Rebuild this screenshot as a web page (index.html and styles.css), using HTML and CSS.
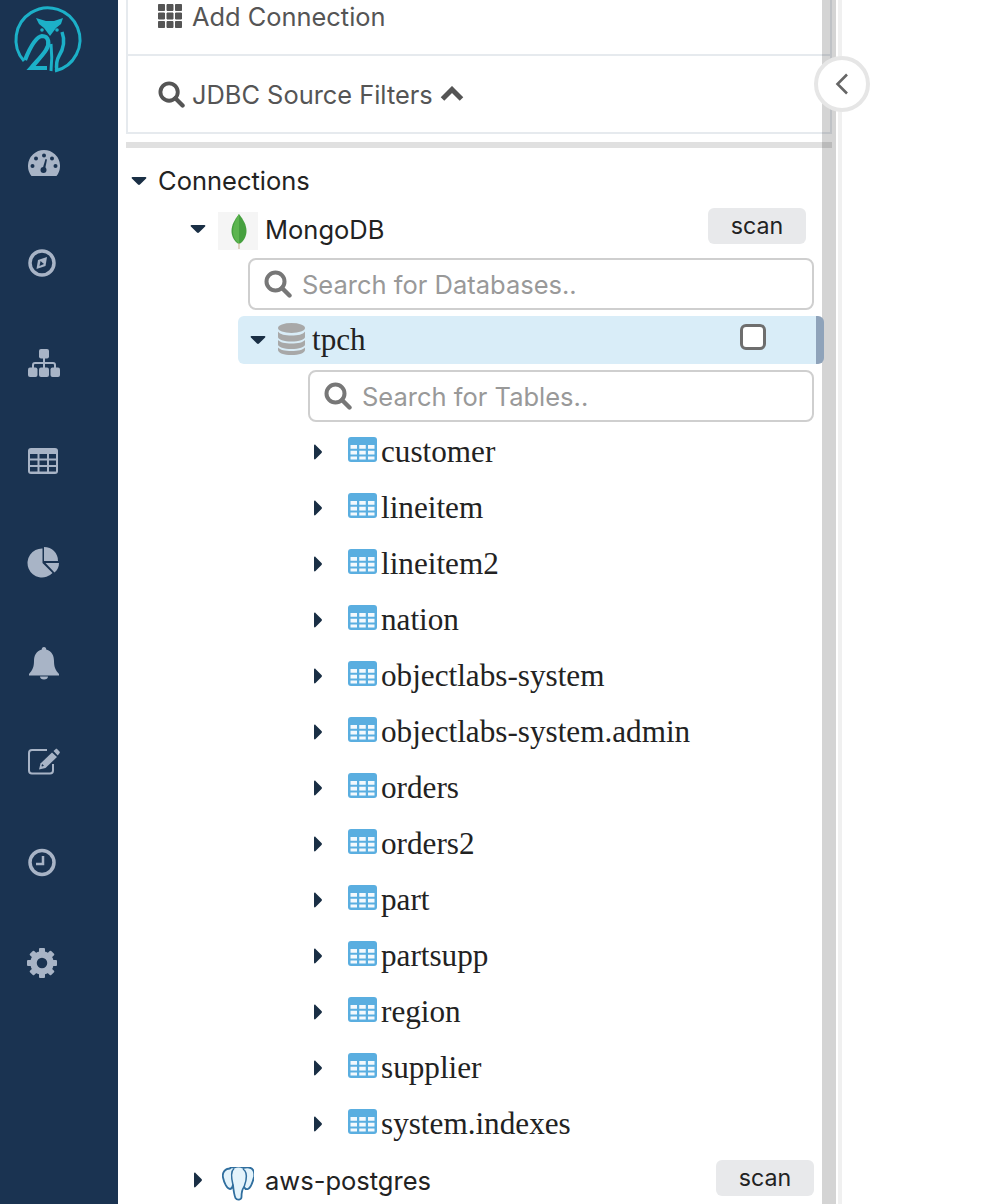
FILE: index.html
```html
<!DOCTYPE html>
<html lang="en">
    <head>
        <meta charset="utf-8">
        <meta name="viewport" content="width=device-width, initial-scale=1.0">
        <title>Connections</title>
        <link rel="stylesheet" href="styles.css">
    </head>
    <body>
        <svg class="sprite" xmlns="http://www.w3.org/2000/svg"> <!-- icons used more than once. -->
            <symbol id="caret-down" viewBox="0 0 16 16"><path d="M1.500 4h13c.8 0 1.200.9.6 1.500L9 11.500c-.6.6-1.400.6-2 0L.9 5.500C.3 4.900.7 4 1.500 4z"/></symbol>
            <symbol id="caret-right" viewBox="0 0 16 16"><path d="M4 1.500v13c0 .8.9 1.200 1.500.6l6-6.100c.6-.6.6-1.400 0-2l-6-6.100C4.900.3 4 .7 4 1.500z"/></symbol>
            <symbol id="search" viewBox="0 0 28 28"><circle cx="11.500" cy="11.500" r="9" fill="none" stroke="currentColor" stroke-width="4"/><path d="M18 18l7.500 7.500" fill="none" stroke="currentColor" stroke-width="4.400" stroke-linecap="round"/></symbol>
            <symbol id="table" viewBox="0 0 29 25"><rect width="29" height="25" rx="3" fill="#5aaee0"/><path fill="#f4f9fd" d="M2.500 8H9v3.800H2.500zM11.250 8h6.500v3.800h-6.500zM20 8h6.500v3.800H20zM2.500 13.800H9v3.800H2.500zM11.250 13.800h6.500v3.800h-6.500zM20 13.800h6.500v3.800H20zM2.500 19.600H9v3H2.500zM11.250 19.600h6.500v3h-6.500zM20 19.600h6.500v3H20z"/></symbol>
        </svg>
        <div id="wrapper">
            <nav class="sidenav"> <!-- dark bar on the left. -->
                <div class="logo-slot">
                    <svg class="logo" viewBox="10 2 76 76" fill="none" stroke="#1cb0c8">
                        <path stroke-width="3" d="M24 61A32 32 0 1 1 55 71"/>
                        <path fill="#1cb0c8" stroke="none" d="M36 18l10 3h8l9-3-2 6-5 4-6 8-6-8-5-4z"/>
                        <circle cx="42" cy="30" r="1.800" fill="#1cb0c8" stroke="none"/>
                        <circle cx="57" cy="30" r="1.800" fill="#1cb0c8" stroke="none"/>
                        <path stroke-width="4.200" d="M25 60c4-10 10-23 17-24 7 0 8 8 4 14-3 5-9 11-15 18h16"/>
                        <path stroke-width="3.500" d="M62 32c3 8 2 16-3 24-3 5-3 9-2 15"/>
                        <path stroke-width="3" d="M51 44c1 9 1 18 0 27"/>
                    </svg>
                </div>
                <div class="nav-item"><svg viewBox="0 0 40 40"><path d="M7.500 33A16 16 0 1 1 32.500 33z"/><g class="cut"><circle cx="20" cy="12.500" r="2"/><circle cx="12" cy="15.500" r="2"/><circle cx="28" cy="15.500" r="2"/><circle cx="8.500" cy="23" r="2"/><circle cx="31.500" cy="23" r="2"/><circle cx="19.500" cy="27" r="3"/><path d="M18.500 26l3-10 1.500.5-2 10z"/></g></svg></div>
                <div class="nav-item"><svg viewBox="0 0 40 40"><circle cx="18" cy="20" r="12" class="line" stroke-width="3.500"/><path d="M12.500 26l1.500-9 9-3-1.500 9z"/><path class="cut" d="M15.500 23l1-5 3.500 3z"/></svg></div>
                <div class="nav-item"><svg viewBox="0 0 40 40"><rect x="15" y="6" width="10" height="9.500" rx="2"/><rect x="4" y="24.500" width="9.500" height="9.500" rx="2"/><rect x="15" y="24.500" width="10" height="9.500" rx="2"/><rect x="26.500" y="24.500" width="9.500" height="9.500" rx="2"/><path class="line" stroke-width="2" d="M20 15v10M9 25v-3a2 2 0 0 1 2-2h18a2 2 0 0 1 2 2v3"/></svg></div>
                <div class="nav-item"><svg viewBox="0 0 40 40"><rect x="4" y="5" width="30" height="26" rx="3"/><path class="cut" d="M6 11h7.500v4.500H6zM15.500 11h7.500v4.500h-7.500zM25 11h7v4.500h-7zM6 17.500h7.500V22H6zM15.500 17.500h7.500V22h-7.500zM25 17.500h7V22h-7zM6 24h7.500v4.500H6zM15.500 24h7.500v4.500h-7.500zM25 24h7v4.500h-7z"/></svg></div>
                <div class="nav-item"><svg viewBox="0 0 40 40"><path d="M18.500 5.500V20l10 10A14.500 14.500 0 1 1 18.500 5.500z"/><path d="M20 4c8 0 14 6 14 14H20z"/><path d="M21.500 20H35c0 4-1.500 7-4.500 9.500z"/></svg></div>
                <div class="nav-item"><svg viewBox="0 0 40 40"><path d="M20 4c1.500 0 2.300 1 2.200 2.500C28 8 30 13 30 18c0 6 1.500 9 5 13v1.500H5V31c3.500-4 5-7 5-13 0-5 2-10 7.800-11.500C17.700 5 18.500 4 20 4z"/><path d="M16 33.500h8c0 2-1.700 3-4 3s-4-1-4-3z"/></svg></div>
                <div class="nav-item"><svg viewBox="0 0 40 40"><path class="line" stroke-width="2" d="M23 7H8a3 3 0 0 0-3 3v17.500a3 3 0 0 0 3 3h18a3 3 0 0 0 3-3V21"/><path d="M15 26.500l1.500-6L28 9.500l5 4.500-11.500 11z"/><path d="M29.500 8l2-1.800c.6-.5 1.300-.5 1.800 0l2.200 2.300c.5.500.5 1.200 0 1.700l-1.800 2.200z"/><path class="cut" d="M17.500 23l.6-2 1.900 1.800-2 .6z"/></svg></div>
                <div class="nav-item"><svg viewBox="0 0 40 40"><circle cx="18" cy="19.500" r="12" class="line" stroke-width="3.500"/><path class="line" stroke-width="2.500" d="M19 13v8h-7"/></svg></div>
                <div class="nav-item"><svg viewBox="0 0 40 40"><circle cx="18" cy="20" r="8.500" class="line" stroke-width="6.500"/><rect x="15" y="5" width="6" height="5" rx="1"/><rect x="15" y="30" width="6" height="5" rx="1"/><rect x="3" y="17" width="5" height="6" rx="1"/><rect x="28" y="17" width="5" height="6" rx="1"/><rect x="15" y="5" width="6" height="5" rx="1" transform="rotate(45 18 20)"/><rect x="15" y="5" width="6" height="5" rx="1" transform="rotate(135 18 20)"/><rect x="15" y="5" width="6" height="5" rx="1" transform="rotate(225 18 20)"/><rect x="15" y="5" width="6" height="5" rx="1" transform="rotate(315 18 20)"/></svg></div>
            </nav>
            <div class="panel">
                <div class="source-box"> <!-- top part is scrolled away. -->
                    <div class="source-row">
                        <svg class="grid-icon" viewBox="0 0 24 24"><path d="M.5.5h6v6h-6zM9 .5h6v6H9zM17.500.5h6v6h-6zM.5 9h6v6h-6zM9 9h6v6H9zM17.500 9h6v6h-6zM.5 17.500h6v6h-6zM9 17.500h6v6H9zM17.500 17.500h6v6h-6z"/></svg>
                        <span>Add Connection</span>
                    </div>
                    <div class="source-row">
                        <svg class="source-icon"><use href="#search"/></svg>
                        <span>JDBC Source Filters</span>
                        <svg class="chevron" viewBox="0 0 24 16"><path d="M2.500 13L12 3.500l9.500 9.500" fill="none" stroke="currentColor" stroke-width="5"/></svg>
                    </div>
                </div>
                <div class="divider"></div>
                <div class="tree">
                    <div class="row row-root">
                        <svg class="caret"><use href="#caret-down"/></svg>
                        <span class="label">Connections</span>
                    </div>
                    <div class="row row-conn">
                        <svg class="caret"><use href="#caret-down"/></svg>
                        <span class="conn-icon mongo">
                            <svg viewBox="0 0 20 38" width="20" height="38"><path d="M10 2c4.500 6 7.500 11 7.500 17 0 6-3.500 11-7 13h-1c-3.500-2-7-7-7-13C2.500 13 5.500 8 10 2z" fill="#46a03f"/><path d="M10 2c-3.500 6-6 11-6 17 0 6 3 10 6 13z" fill="#5cb54f"/><path d="M10 31v6" stroke="#c9b99a" stroke-width="1.200"/></svg>
                        </span>
                        <span class="label">MongoDB</span>
                        <span class="scan">scan</span>
                    </div>
                    <div class="search search-db">
                        <svg><use href="#search"/></svg>
                        <input type="text" placeholder="Search for Databases..">
                    </div>
                    <div class="row row-db">
                        <svg class="caret"><use href="#caret-down"/></svg>
                        <svg class="db-icon" viewBox="0 0 27 32" fill="#a8a8a8"><ellipse cx="13.500" cy="5" rx="13.500" ry="5"/><path d="M0 8.500c2 3 7 4 13.500 4S25 11.500 27 8.500V14c0 2.500-6 4.500-13.500 4.500S0 16.500 0 14z"/><path d="M0 17c2 2.500 7 3.500 13.500 3.500S25 19.500 27 17v4.500c0 2.500-6 4.500-13.500 4.500S0 24 0 21.500z"/><path d="M0 24.500c2 2.500 7 3.500 13.500 3.500S25 27 27 24.500V27c0 3-6 5-13.500 5S0 30 0 27z"/></svg>
                        <span class="label serif">tpch</span>
                        <span class="check"></span>
                    </div>
                    <div class="search search-table">
                        <svg><use href="#search"/></svg>
                        <input type="text" placeholder="Search for Tables..">
                    </div>
                    <div class="table-list">
                        <div class="row row-table"><svg class="caret"><use href="#caret-right"/></svg><svg class="table-icon"><use href="#table"/></svg><span class="label serif">customer</span></div>
                        <div class="row row-table"><svg class="caret"><use href="#caret-right"/></svg><svg class="table-icon"><use href="#table"/></svg><span class="label serif">lineitem</span></div>
                        <div class="row row-table"><svg class="caret"><use href="#caret-right"/></svg><svg class="table-icon"><use href="#table"/></svg><span class="label serif">lineitem2</span></div>
                        <div class="row row-table"><svg class="caret"><use href="#caret-right"/></svg><svg class="table-icon"><use href="#table"/></svg><span class="label serif">nation</span></div>
                        <div class="row row-table"><svg class="caret"><use href="#caret-right"/></svg><svg class="table-icon"><use href="#table"/></svg><span class="label serif">objectlabs-system</span></div>
                        <div class="row row-table"><svg class="caret"><use href="#caret-right"/></svg><svg class="table-icon"><use href="#table"/></svg><span class="label serif">objectlabs-system.admin</span></div>
                        <div class="row row-table"><svg class="caret"><use href="#caret-right"/></svg><svg class="table-icon"><use href="#table"/></svg><span class="label serif">orders</span></div>
                        <div class="row row-table"><svg class="caret"><use href="#caret-right"/></svg><svg class="table-icon"><use href="#table"/></svg><span class="label serif">orders2</span></div>
                        <div class="row row-table"><svg class="caret"><use href="#caret-right"/></svg><svg class="table-icon"><use href="#table"/></svg><span class="label serif">part</span></div>
                        <div class="row row-table"><svg class="caret"><use href="#caret-right"/></svg><svg class="table-icon"><use href="#table"/></svg><span class="label serif">partsupp</span></div>
                        <div class="row row-table"><svg class="caret"><use href="#caret-right"/></svg><svg class="table-icon"><use href="#table"/></svg><span class="label serif">region</span></div>
                        <div class="row row-table"><svg class="caret"><use href="#caret-right"/></svg><svg class="table-icon"><use href="#table"/></svg><span class="label serif">supplier</span></div>
                        <div class="row row-table"><svg class="caret"><use href="#caret-right"/></svg><svg class="table-icon"><use href="#table"/></svg><span class="label serif">system.indexes</span></div>
                    </div>
                    <div class="row row-conn row-last">
                        <svg class="caret"><use href="#caret-right"/></svg>
                        <span class="conn-icon elephant">
                            <svg viewBox="0 0 32 34" width="32" height="34" fill="#e3f3fb" stroke="#2f6e9e" stroke-width="1.800" stroke-linejoin="round"><path d="M8 1.500C3 1.500 0 5.500 1 10.500 2 15.500 5 22 8 22c1.500 0 2.500-2 3-4 .5 5 1 10 2.500 13 1.500 2.500 6 2 6-1 0-4 0-7 2.500-10 1 2 2.500 2.500 4 2 3-1.500 5-8 6-12 1-5-1-9-5-9.500-2-.3-4 0-5.500.5-3-1.500-7-1.500-9-.5-1.500-.3-3-.2-4 0z"/><path fill="none" stroke-width="1.500" d="M12 1.500C9 4 9 10 11 18M21 2c3 2 4 6 3 11-.5 3-2 6-2 8"/></svg>
                        </span>
                        <span class="label">aws-postgres</span>
                        <span class="scan">scan</span>
                    </div>
                </div>
                <div class="scroll-strip"></div>
            </div>
            <div class="rail"></div>
            <button type="button" class="collapse">
                <svg viewBox="0 0 16 24" width="16" height="24"><path d="M13 2.500L3.500 12l9.500 9.500" fill="none" stroke="#666" stroke-width="2.600"/></svg>
            </button>
        </div>
    </body>
</html>
```

FILE: styles.css
```css
*{
    margin: 0;
    padding: 0;
    box-sizing: border-box;
}
html, body{
    height: 100%;
    overflow: hidden;
    background: #fff;
}
body{
    font-family: Inter, "Liberation Sans", sans-serif;
    color: #222;
}
.sprite{
    display: none;
}
#wrapper{
    height: 1204px;
    display: flex;
    position: relative;
    overflow: hidden;
}
/* left bar */
.sidenav{
    width: 118px;
    flex: none;
    background-color: #1a3351;
}
.logo-slot{
    height: 113px;
    padding: 2px 0 0 10px;
}
.logo{
    display: block;
    width: 76px;
    height: 76px;
}
.nav-item{
    height: 100px;
    padding-left: 24px;
    display: flex;
    align-items: center;
}
.nav-item svg{
    width: 40px;
    height: 40px;
    fill: #a8b4c6;
}
.nav-item .cut{
    fill: #1a3351;
}
.nav-item .line{
    fill: none;
    stroke: #a8b4c6;
}
/* middle panel */
.panel{
    width: 718px;
    flex: none;
    padding-left: 8px;
    position: relative;
}
.source-box{
    width: 706px;
    margin-top: -23px;
    border: 2px solid #e6eaee;
}
.source-row{
    height: 76px;
    padding-left: 30px;
    display: flex;
    align-items: center;
    font-size: 25.4px;
    color: #555;
}
.source-row:first-child{
    height: 77px;
    border-bottom: 2px solid #e6eaee;
}
.grid-icon{
    width: 24px;
    height: 24px;
    margin-right: 10px;
    margin-bottom: 2px;
    fill: #555;
    stroke: #555;
    stroke-linejoin: round;
}
.source-icon{
    width: 27px;
    height: 27px;
    margin-right: 7px;
    color: #555;
}
.chevron{
    width: 24px;
    height: 16px;
    margin-left: 7px;
    color: #555;
}
.divider{
    width: 706px;
    height: 6px;
    margin-top: 8px;
    background-color: #e0e0e0;
}
.tree{
    width: 706px;
    padding-top: 9px;
}
.row{
    display: flex;
    align-items: center;
    height: 48px;
    font-size: 25.5px;
}
.caret{
    width: 16px;
    height: 16px;
    flex: none;
    fill: #1a2f45;
}
.label{
    color: #222;
}
.serif{
    font-family: "Liberation Serif", serif;
    font-size: 31.2px;
}
.row-root{
    padding-left: 5px;
}
.row-root .label{
    margin-left: 11px;
    margin-bottom: 1px;
}
.row-conn{
    padding-left: 64px;
    padding-right: 26px;
}
.row-last{
    height: 56px;
    padding-right: 18px;
}
.conn-icon{
    width: 40px;
    height: 38px;
    margin-left: 12px;
    display: flex;
    align-items: center;
    justify-content: center;
}
.mongo{
    margin-top: 4px;
    background-color: #f5f5f5;
}
.mongo svg{
    margin-left: 2px;
}
.elephant svg{
    margin-top: 7px;
}
.row-conn .label{
    margin-left: 7px;
}
.scan{
    width: 98px;
    height: 36px;
    margin-left: auto;
    margin-bottom: 6px;
    background-color: #e8e9eb;
    border-radius: 6px;
    font-size: 23.2px;
    line-height: 36px;
    text-align: center;
    color: #222;
}
.row-last .scan{
    margin-bottom: 4px;
}
.search{
    height: 52px;
    margin-right: 18px;
    border: 2px solid #cfcfcf;
    border-radius: 8px;
    display: flex;
    align-items: center;
    padding-left: 14px;
    color: #777;
}
.search svg{
    width: 28px;
    height: 28px;
    flex: none;
}
.search input{
    flex: 1;
    min-width: 0;
    margin-left: 10px;
    border: none;
    outline: none;
    background: transparent;
    font-family: Inter, "Liberation Sans", sans-serif;
    font-size: 25.5px;
}
.search input::placeholder{
    color: #999;
}
.search-db{
    margin-top: 5px;
    margin-left: 122px;
}
.search-table{
    margin-top: 6px;
    margin-left: 182px;
}
.row-db{
    margin-top: 6px;
    margin-left: 112px;
    margin-right: 8px;
    padding-left: 12px;
    background-color: #d9edf8;
    border-right: 8px solid #8fa3ba;
    border-radius: 6px;
    position: relative; /* stays over the scroll strip. */
    z-index: 2;
}
.db-icon{
    width: 27px;
    height: 32px;
    margin-left: 12px;
    margin-bottom: 2px;
}
.row-db .label{
    margin-left: 7px;
}
.check{
    width: 26px;
    height: 26px;
    margin-left: auto;
    margin-right: 50px;
    margin-bottom: 7px;
    background-color: #fff;
    border: 3px solid #6e6e6e;
    border-radius: 6px;
}
.table-list{
    margin-top: 2px;
}
.row-table{
    height: 56px;
    padding-left: 184px;
}
.table-icon{
    width: 29px;
    height: 25px;
    margin-left: 22px;
    margin-bottom: 6px;
}
.row-table .label{
    margin-left: 4px;
}
.scroll-strip{ /* scrollbar track lying over the panel. */
    position: absolute;
    top: 0;
    right: 0;
    bottom: 0;
    width: 14px;
    background-color: rgba(0, 0, 0, .17);
}
/* thin line right of the panel */
.rail{
    width: 4px;
    flex: none;
    margin-left: 2px;
    background-color: #f0f0f0;
}
.collapse{
    position: absolute;
    left: 814px;
    top: 56px;
    width: 56px;
    height: 56px;
    border: 4px solid #e6e6e6;
    border-radius: 50%;
    background-color: #fff;
    display: flex;
    align-items: center;
    justify-content: center;
    z-index: 3;
}
```
